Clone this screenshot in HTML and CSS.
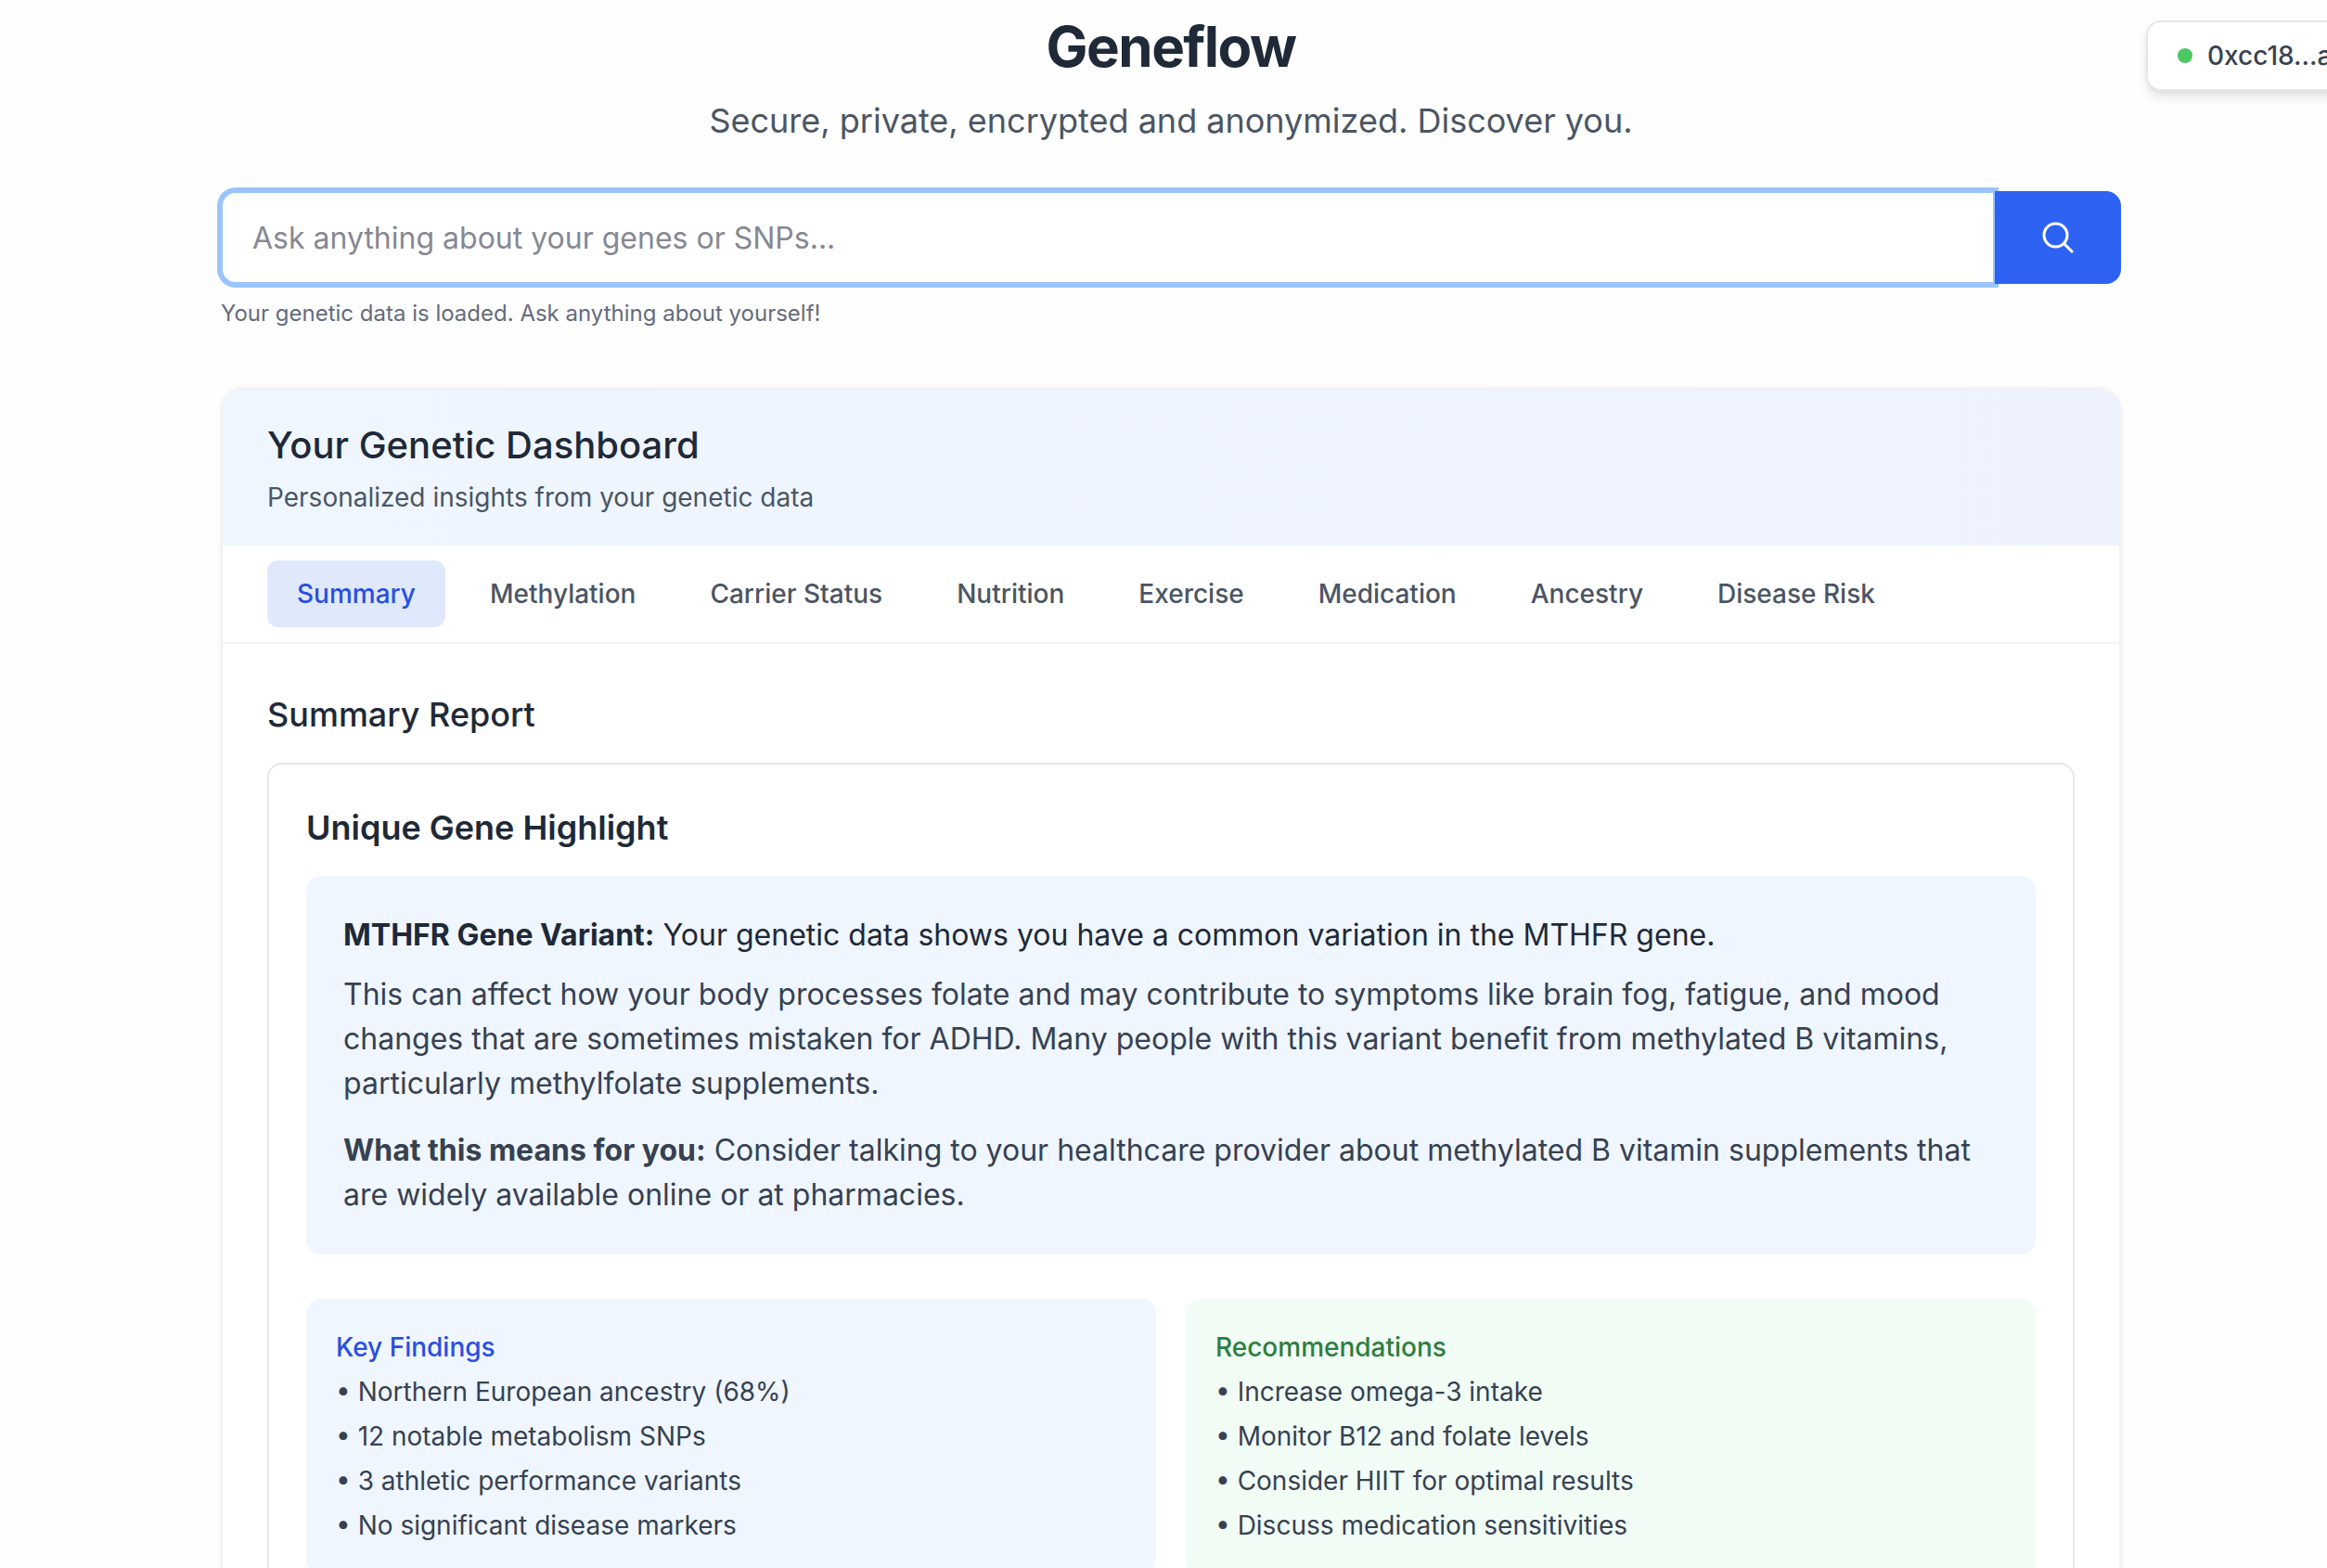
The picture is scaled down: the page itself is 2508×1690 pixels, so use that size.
FILE: index.html
```html
<!doctype html>
<html>
    <head>
        <title>Geneflow</title>
        <meta charset="utf-8">
        <link rel="stylesheet" href="styles.css">
    </head>

    <body>
        <div class="wallet">
            <span class="wallet-dot"></span>
            <span class="wallet-address">0xcc18...a3f2</span>
        </div>

        <main class="page">
            <header class="page-header">
                <h1>Geneflow</h1>
                <p>Secure, private, encrypted and anonymized. Discover you.</p>
            </header>

            <section class="search">
                <div class="search-row">
                    <input class="search-input" type="text" placeholder="Ask anything about your genes or SNPs...">
                    <button class="search-button">
                        <svg viewBox="0 0 24 24" width="40" height="40" fill="none" stroke="#fff" stroke-width="1.8" stroke-linecap="round" stroke-linejoin="round">
                            <path d="M21 21l-5.197-5.197m0 0A7.5 7.5 0 105.196 5.196a7.5 7.5 0 0010.607 10.607z"></path>
                        </svg>
                    </button>
                </div>
                <p class="search-help">Your genetic data is loaded. Ask anything about yourself!</p>
            </section>

            <section class="dashboard">
                <div class="dashboard-header">
                    <h2>Your Genetic Dashboard</h2>
                    <p>Personalized insights from your genetic data</p>
                </div>

                <nav class="tabs">
                    <a class="tab active">Summary</a>
                    <a class="tab">Methylation</a>
                    <a class="tab">Carrier Status</a>
                    <a class="tab">Nutrition</a>
                    <a class="tab">Exercise</a>
                    <a class="tab">Medication</a>
                    <a class="tab">Ancestry</a>
                    <a class="tab">Disease Risk</a>
                </nav>

                <div class="tab-body">
                    <h3>Summary Report</h3>

                    <div class="report">
                        <h4>Unique Gene Highlight</h4>

                        <div class="highlight">
                            <p class="highlight-lead"><strong>MTHFR Gene Variant:</strong> Your genetic data shows you have a common variation in the MTHFR gene.</p>
                            <p class="highlight-body">This can affect how your body processes folate and may contribute to symptoms like brain fog, fatigue, and mood changes that are sometimes mistaken for ADHD. Many people with this variant benefit from methylated B vitamins, particularly methylfolate supplements.</p>
                            <p><strong>What this means for you:</strong> Consider talking to your healthcare provider about methylated B vitamin supplements that are widely available online or at pharmacies.</p>
                        </div>

                        <div class="panels">
                            <div class="panel panel-blue">
                                <h5>Key Findings</h5>
                                <ul>
                                    <li>• Northern European ancestry (68%)</li>
                                    <li>• 12 notable metabolism SNPs</li>
                                    <li>• 3 athletic performance variants</li>
                                    <li>• No significant disease markers</li>
                                </ul>
                            </div>

                            <div class="panel panel-green">
                                <h5>Recommendations</h5>
                                <ul>
                                    <li>• Increase omega-3 intake</li>
                                    <li>• Monitor B12 and folate levels</li>
                                    <li>• Consider HIIT for optimal results</li>
                                    <li>• Discuss medication sensitivities</li>
                                </ul>
                            </div>
                        </div>
                    </div>
                </div>
            </section>
        </main>
    </body>
</html>
```

FILE: styles.css
```css
html, body {
    margin: 0;
    padding: 0;
    height: 1690px;
    overflow: hidden;
}

body {
    position: relative;
    background: #fefefe;
    font-family: "Inter", "Liberation Sans", sans-serif;
    color: #1f2937;
}

h1, h2, h3, h4, h5, p, ul {
    margin: 0;
    padding: 0;
}

ul {
    list-style: none;
}

.wallet {
    position: absolute;
    top: 22px;
    left: 2313px;
    display: flex;
    align-items: center;
    gap: 16px;
    padding: 16px 32px;
    background: #fff;
    border: 2px solid #e5e7eb;
    border-radius: 16px;
    box-shadow: 0 8px 12px rgba(0, 0, 0, 0.08), 0 3px 5px rgba(0, 0, 0, 0.05);
    font-size: 28px;
    line-height: 40px;
    font-weight: 500;
    color: #374151;
    white-space: nowrap;
}

.wallet-dot {
    width: 16px;
    height: 16px;
    border-radius: 50%;
    background: #4ac763;
}

.page {
    width: 2048px;
    margin-left: 238px;
}

.page-header {
    padding-top: 10px;
    text-align: center;
}

.page-header h1 {
    font-size: 60px;
    line-height: 80px;
    font-weight: 700;
    letter-spacing: -1.5px;
    color: #1f2937;
}

.page-header p {
    margin-top: 12px;
    font-size: 36px;
    line-height: 56px;
    color: #4b5563;
}

.search {
    margin-top: 48px;
}

.search-row {
    display: flex;
}

.search-input {
    flex: 1;
    box-sizing: border-box;
    height: 100px;
    padding: 0 32px;
    background: #fff;
    border: 2px solid #9ac4fb;
    border-radius: 16px 0 0 16px;
    box-shadow: 0 0 0 4px #9ac4fb;
    outline: none;
    font-family: inherit;
    font-size: 32px;
    color: #1f2937;
}

.search-input::placeholder {
    color: #868892;
    opacity: 1;
}

.search-button {
    display: flex;
    align-items: center;
    justify-content: center;
    width: 136px;
    height: 100px;
    padding: 0;
    background: #2d62f3;
    border: none;
    border-radius: 0 16px 16px 0;
}

.search-help {
    margin-top: 16px;
    font-size: 24px;
    line-height: 32px;
    color: #646b7c;
}

.dashboard {
    margin-top: 64px;
    background: #fff;
    border: 2px solid #f1f1f2;
    border-radius: 24px;
    box-shadow: 0 0 6px rgba(0, 0, 0, 0.06);
    overflow: hidden;
}

.dashboard-header {
    padding: 32px 48px;
    background: linear-gradient(to right, #eff6ff, #eef2ff);
}

.dashboard-header h2 {
    font-size: 40px;
    line-height: 56px;
    font-weight: 500;
    color: #1f2937;
}

.dashboard-header p {
    margin-top: 8px;
    font-size: 28px;
    line-height: 40px;
    color: #4b5563;
}

.tabs {
    display: flex;
    gap: 16px;
    padding: 16px 48px;
    border-bottom: 2px solid #f3f4f6;
}

.tab {
    padding: 16px 32px;
    border-radius: 12px;
    font-size: 28px;
    line-height: 40px;
    font-weight: 500;
    color: #4b5563;
}

.tab.active {
    background: #dfe9fb;
    color: #2a4fe0;
}

.tab-body {
    padding: 48px;
}

.tab-body h3 {
    font-size: 36px;
    line-height: 56px;
    font-weight: 500;
    color: #1f2937;
}

.report {
    margin-top: 24px;
    padding: 40px;
    background: #fff;
    border: 2px solid #e5e7eb;
    border-radius: 16px;
}

.report h4 {
    font-size: 36px;
    line-height: 56px;
    font-weight: 600;
    color: #1f2937;
}

.highlight {
    margin-top: 24px;
    padding: 40px;
    background: #eff6ff;
    border-radius: 16px;
    font-size: 32px;
    line-height: 48px;
    color: #374151;
}

.highlight strong {
    font-weight: 700;
}

.highlight-lead {
    margin-bottom: 16px;
    color: #1f2937;
}

.highlight-body {
    margin-bottom: 24px;
}

.panels {
    display: grid;
    grid-template-columns: 1fr 1fr;
    gap: 32px;
    margin-top: 48px;
}

.panel {
    padding: 32px;
    border-radius: 16px;
    font-size: 28px;
    line-height: 40px;
    color: #374151;
}

.panel h5 {
    margin-bottom: 8px;
    font-size: 28px;
    line-height: 40px;
    font-weight: 500;
}

.panel li + li {
    margin-top: 8px;
}

.panel-blue {
    background: #eff6ff;
}

.panel-blue h5 {
    color: #2a4fe0;
}

.panel-green {
    background: #f1fcf5;
}

.panel-green h5 {
    color: #2e7e40;
}
```
